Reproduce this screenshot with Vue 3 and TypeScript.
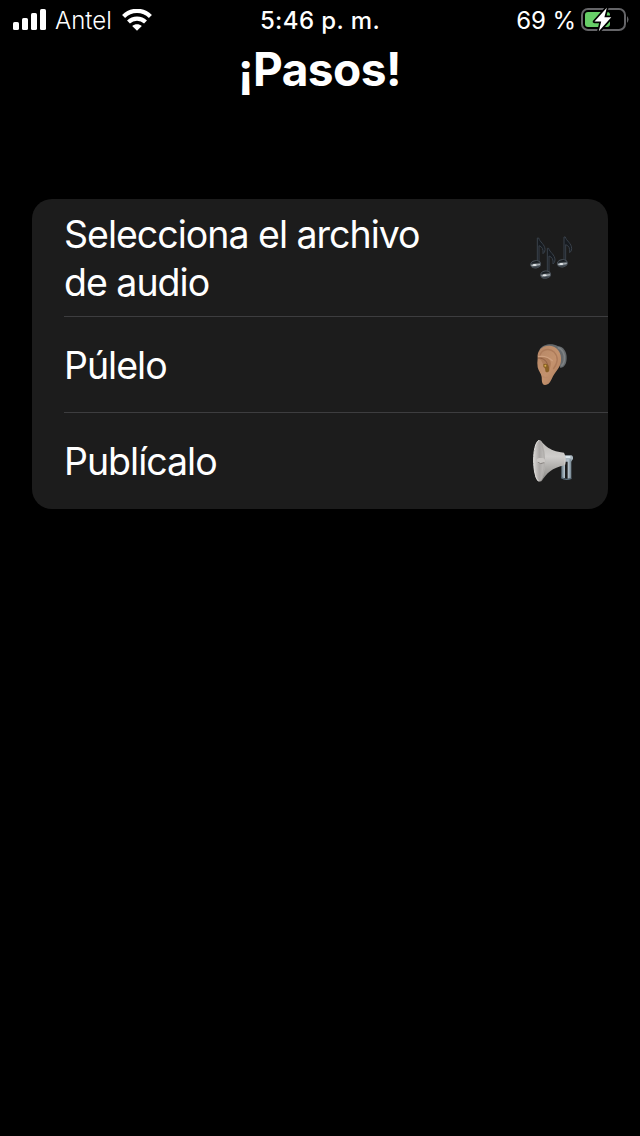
<script setup lang="ts">
interface Step {
  label: string
  icon: 'notes' | 'ear' | 'speaker'
}

const steps: Step[] = [
  { label: 'Selecciona el archivo de audio', icon: 'notes' },
  { label: 'Púlelo', icon: 'ear' },
  { label: 'Publícalo', icon: 'speaker' },
]
</script>

<template>
  <main class="screen">
    <header class="status">
      <div class="side">
        <svg class="signal" width="34" height="22" viewBox="0 0 34 22" fill="#fff">
          <rect x="0" y="13" width="6" height="8" rx="1.6" />
          <rect x="9" y="9" width="6" height="12" rx="1.6" />
          <rect x="18" y="4" width="6" height="17" rx="1.6" />
          <rect x="27" y="0" width="6" height="21" rx="1.6" />
        </svg>
        <span class="carrier">Antel</span>
        <svg class="wifi" width="30" height="22" viewBox="0 0 30 22">
          <g fill="none" stroke="#fff" stroke-width="4.2">
            <path d="M1.6 7.5C9-.1 21-.1 28.4 7.5" />
            <path d="M6.5 12.9C11.2 8.4 18.8 8.4 23.5 12.9" />
          </g>
          <path d="M10.2 17C12.9 14.5 17.1 14.5 19.8 17L15 21.8Z" fill="#fff" />
        </svg>
      </div>
      <span class="time">5:46 p. m.</span>
      <div class="side right">
        <span class="percent">69 %</span>
        <svg class="battery" width="48" height="26" viewBox="0 0 48 26">
          <rect x="1" y="2" width="43" height="21" rx="6" fill="none" stroke="#656568" stroke-width="2" />
          <path d="M46 9Q49 12.5 46 16Z" fill="#656568" />
          <rect x="4" y="5" width="25" height="15" rx="3" fill="#67ce67" />
          <path d="M25.8.8 13.5 14.6H20.2L17.8 24.3 30.3 10.3H23.4Z" fill="#fff" stroke="#000" stroke-width="3.4" paint-order="stroke" stroke-linejoin="round" />
        </svg>
      </div>
    </header>

    <h1 class="title">¡Pasos!</h1>

    <ul class="card">
      <li v-for="step in steps" :key="step.icon" class="row">
        <span class="label">{{ step.label }}</span>

        <svg v-if="step.icon === 'notes'" class="icon" viewBox="0 0 192 192">
          <defs>
            <linearGradient id="head" x1="0" y1="0" x2="0" y2="1">
              <stop offset="0" stop-color="#0b0e11" />
              <stop offset=".3" stop-color="#20262b" />
              <stop offset=".6" stop-color="#aab1b6" />
              <stop offset=".75" stop-color="#59626a" />
              <stop offset="1" stop-color="#12161a" />
            </linearGradient>
            <g id="note">
              <path d="M14 73V-2H18C21 10 37 17 37 33Q37 41 31 45Q33 25 19 21V73Z" fill="#171b20" stroke="#39414a" stroke-width="3" stroke-linejoin="round" />
              <ellipse cx="9" cy="77" rx="15" ry="11" transform="rotate(-8 9 77)" fill="url(#head)" stroke="#4b535b" stroke-width="3" />
              <ellipse cx="6" cy="79" rx="6" ry="3" fill="#e2e6e8" />
            </g>
          </defs>
          <use href="#note" x="38" y="38" />
          <use href="#note" x="118" y="35" />
          <use href="#note" x="68" y="69" />
        </svg>

        <svg v-else-if="step.icon === 'ear'" class="icon" viewBox="0 0 192 192">
          <defs>
            <linearGradient id="skin" x1="0" y1="0" x2="1" y2="1">
              <stop offset="0" stop-color="#b58767" />
              <stop offset=".55" stop-color="#c4926d" />
              <stop offset="1" stop-color="#a8795a" />
            </linearGradient>
          </defs>
          <path d="M58 51C70 31 98 31 113 39C132 41 141 58 140 76C140 91 134 104 121 105L112 74L83 41Z" fill="#65696c" />
          <path d="M113 44C128 47 136 66 133 82Q131 94 124 99" fill="none" stroke="#7d8183" stroke-width="5" />
          <path d="M53 76C50 51 67 37 89 38C112 40 126 61 123 84C121 104 107 115 99 130C91 147 87 156 75 156C64 155 66 141 65 132C64 123 55 113 53 103Q51 91 53 76Z" fill="url(#skin)" />
          <path d="M60 68C64 48 89 44 103 58C117 73 111 93 100 108" fill="none" stroke="#ad7b5a" stroke-width="4" />
          <path d="M60 70C80 67 96 80 92 97Q91 106 86 115C82 121 74 118 75 109L68 91Q65 80 55 76" fill="#ae7c59" />
          <path d="M54 75C66 74 78 81 81 91Q86 100 86 107" fill="none" stroke="#88593e" stroke-width="2.5" />
          <path d="M70 94Q78 90 84 97L88 112Q85 121 77 116L75 105L70 102Z" fill="#8a6025" />
          <path d="M54 71C70 68 87 73 98 84" fill="none" stroke="#cfa180" stroke-width="4" />
          <circle cx="76" cy="98" r="3" fill="#d7af4b" />
          <path d="M68 129Q74 137 83 132" fill="none" stroke="#bd8b69" stroke-width="4" />
        </svg>

        <svg v-else class="icon" viewBox="0 0 192 192">
          <defs>
            <linearGradient id="horn" x1="0" y1="0" x2="0" y2="1">
              <stop offset="0" stop-color="#b8b6b3" />
              <stop offset=".4" stop-color="#d0cecc" />
              <stop offset=".65" stop-color="#b0aeab" />
              <stop offset="1" stop-color="#878583" />
            </linearGradient>
            <linearGradient id="bell" x1="0" y1="0" x2="1" y2="0">
              <stop offset="0" stop-color="#d6d4d2" />
              <stop offset=".5" stop-color="#aaa7a5" />
              <stop offset="1" stop-color="#c3c1be" />
            </linearGradient>
            <linearGradient id="metal" x1="0" y1="0" x2="1" y2="0">
              <stop offset="0" stop-color="#657782" />
              <stop offset=".5" stop-color="#dce8ef" />
              <stop offset="1" stop-color="#71828e" />
            </linearGradient>
          </defs>
          <path d="M133 79H153Q160 80 159 90L153 98H134Z" fill="#a9b6bf" />
          <path d="M136 84H151" stroke="#eef6fa" stroke-width="4" />
          <path d="M124 99H135V147H124ZM143 91H154V149H143Z" fill="url(#metal)" />
          <path d="M124 146Q137 155 154 148" fill="none" stroke="#596b77" stroke-width="4" />
          <path d="M59 33C72 43 82 66 132 71Q140 85 135 109C95 116 80 134 65 156Q54 163 46 143L41 94L47 48Z" fill="url(#horn)" />
          <ellipse cx="58" cy="95" rx="17" ry="62" fill="url(#bell)" />
          <path d="M57 34C35 45 36 140 56 157" fill="none" stroke="#dfddda" stroke-width="3" />
          <path d="M65 44Q81 91 67 143" fill="none" stroke="#a6a3a0" stroke-width="4" opacity=".55" />
          <rect x="50" y="87" width="25" height="17" rx="8" fill="#cbc8c5" />
          <path d="M53 100Q61 107 73 101" fill="none" stroke="#85817d" stroke-width="3" />
          <path d="M130 74Q138 90 134 107" fill="none" stroke="#d0cecb" stroke-width="3" />
        </svg>
      </li>
    </ul>
  </main>
</template>

<style>
body {
  background: #000;
}
</style>

<style scoped>
.screen {
  min-height: 1136px;
  box-sizing: border-box;
  background: #000;
  color: #fff;
  font-family: Inter, "Liberation Sans", sans-serif;
  overflow: hidden;
}
.status {
  height: 40px;
  display: grid;
  grid-template-columns: 1fr auto 1fr;
  align-items: center;
  padding: 0 11px 0 13px;
  font-size: 24px;
  line-height: 38px;
}
.status span {
  padding-top: 2px;
}
.side {
  display: flex;
  align-items: center;
}
.right {
  justify-content: flex-end;
}
.carrier {
  width: 59px;
  margin-left: 8px;
  letter-spacing: 0;
  font-weight: 350;
}
.wifi {
  margin-left: 8px;
}
.time {
  margin-right: 2px;
  font-weight: 500;
  letter-spacing: 0.4px;
}
.percent {
  letter-spacing: -0.1px;
  font-weight: 370;
}
.battery {
  margin-left: 5px;
}
.title {
  margin: 0;
  height: 60px;
  padding-right: 1px;
  font-size: 46px;
  line-height: 59px;
  font-weight: 700;
  letter-spacing: -0.5px;
  text-align: center;
}
.card {
  list-style: none;
  margin: 99px 32px 0;
  padding: 0;
  height: 310px;
  display: grid;
  grid-template-rows: 118px 96px 96px;
  border-radius: 20px;
  background: #1c1c1c;
  overflow: hidden;
}
.row {
  display: flex;
  align-items: center;
  justify-content: space-between;
  margin-left: 32px;
  padding-right: 24px;
  box-sizing: border-box;
  border-bottom: 1px solid #3d3d3f;
}
.row:last-child {
  border-bottom: 0;
}
.label {
  width: 390px;
  padding-top: 2px;
  font-size: 37.5px;
  line-height: 48px;
  font-weight: 370;
  letter-spacing: -1px;
}
.icon {
  width: 64px;
  height: 64px;
}
</style>
